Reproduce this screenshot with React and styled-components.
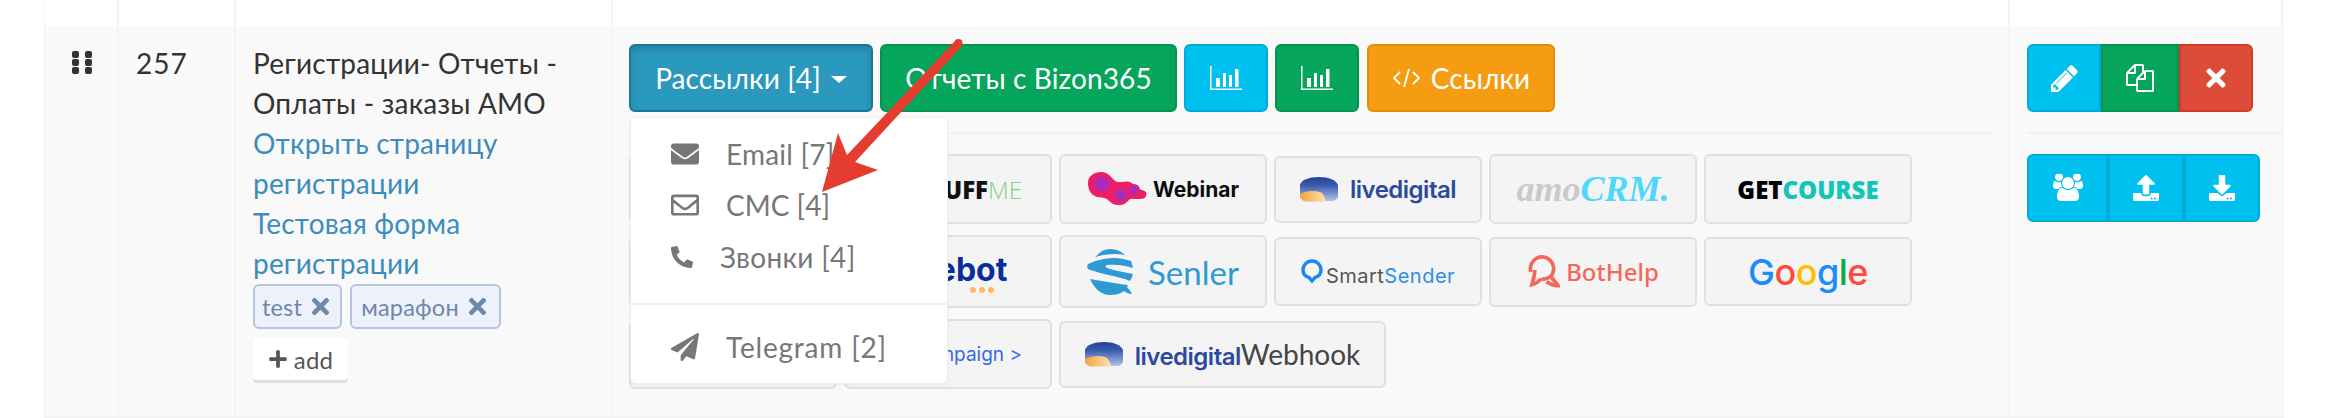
import React from 'react'
import styled, { createGlobalStyle } from 'styled-components'
import {
  FaEnvelope,
  FaRegEnvelope,
  FaPhoneAlt,
  FaPaperPlane,
  FaTimes,
  FaPlus,
  FaUpload,
  FaDownload,
} from 'react-icons/fa'

const GlobalStyle = createGlobalStyle`
  html, body {
    margin: 0;
    background: #fff;
    font-family: "Lato", "Noto Sans", sans-serif;
    font-size: 28px;
    letter-spacing: 0.2px;
    color: #333;
  }
`

const tones = {
  primary: ['#2b98bd', '#1c7796'],
  success: ['#05a65b', '#059250'],
  info: ['#00c0ef', '#00acd6'],
  warning: ['#f59c12', '#e08e0b'],
  danger: ['#dd4b39', '#d73925'],
}

const BarsIcon = () => (
  <svg width="32" height="24" viewBox="0 0 32 24" fill="#fff">
    <path d="M0 0h1.500v22.500H32V24H0z" />
    <rect x="6" y="12" width="4" height="9" />
    <rect x="13" y="7" width="3" height="14" />
    <rect x="19" y="9" width="3" height="12" />
    <rect x="25" y="3" width="3.500" height="18" />
  </svg>
)

const CodeIcon = () => (
  <svg width="29" height="20" viewBox="0 0 29 20" fill="none" stroke="#fff" strokeWidth="1.800">
    <path d="M8 4 2 10l6 6M21 4l6 6-6 6M17 1l-5 18" />
  </svg>
)

const PencilIcon = () => (
  <svg width="27" height="27" viewBox="128 128 1536 1536" fill="#fff">
    <path d="M491 1536l91-91-235-235-91 91v107h128v128h107zm523-928q0-22-22-22-10 0-17 7l-542 542q-7 7-7 17 0 22 22 22 10 0 17-7l542-542q7-7 7-17zm-54-192l416 416-832 832h-416v-416zm683 96q0 53-37 90l-166 166-416-416 166-165q36-38 90-38 53 0 91 38l235 234q37 39 37 91z" />
  </svg>
)

const FilesIcon = () => (
  <svg width="28" height="28" viewBox="0 0 1792 1792" fill="#fff">
    <path d="M1696 384q40 0 68 28t28 68v1216q0 40-28 68t-68 28h-960q-40 0-68-28t-28-68v-288h-544q-40 0-68-28t-28-68v-672q0-40 20-88t48-76l408-408q28-28 76-48t88-20h416q40 0 68 28t28 68v328q68-40 128-40h416zm-544 213l-299 299h299v-299zm-640-384l-299 299h299v-299zm196 647l316-316v-416h-384v416q0 40-28 68t-68 28h-416v640h512v-256q0-40 20-88t48-76zm956 804v-1152h-384v416q0 40-28 68t-68 28h-416v640h896z" />
  </svg>
)

const UsersIcon = () => (
  <svg width="30" height="28" viewBox="0 128 1920 1664" fill="#fff">
    <path d="M593 896q-162 5-265 128h-134q-82 0-138-40.500t-56-118.500q0-353 124-353 6 0 43.500 21t97.500 42.500 119 21.500q67 0 133-23-5 37-5 66 0 139 81 256zm1071 637q0 120-73 189.500t-194 69.500h-874q-121 0-194-69.500t-73-189.500q0-53 3.500-103.500t14-109 26.500-108.500 43-97.500 62-81 85.500-53.500 111.500-20q10 0 43 21.500t73 48 107 48 135 21.500 135-21.500 107-48 73-48 43-21.500q61 0 111.500 20t85.500 53.500 62 81 43 97.500 26.500 108.500 14 109 3.500 103.500zm-1024-1277q0 106-75 181t-181 75-181-75-75-181 75-181 181-75 181 75 75 181zm704 384q0 159-112.500 271.500t-271.500 112.500-271.500-112.500-112.500-271.500 112.500-271.500 271.500-112.500 271.500 112.500 112.500 271.500zm576 225q0 78-56 118.500t-138 40.500h-134q-103-123-265-128 81-117 81-256 0-29-5-66 66 23 133 23 59 0 119-21.500t97.500-42.500 43.500-21q124 0 124 353zm-128-609q0 106-75 181t-181 75-181-75-75-181 75-181 181-75 181 75 75 181z" />
  </svg>
)

const GripSvg = styled.svg`
  display: block;
`

const GripIcon = () => (
  <GripSvg width="20" height="23" viewBox="0 0 20 23" fill="#333">
    <rect x="0" y="0" width="7" height="7" rx="2" />
    <rect x="13" y="0" width="7" height="7" rx="2" />
    <rect x="0" y="8" width="7" height="7" rx="2" />
    <rect x="13" y="8" width="7" height="7" rx="2" />
    <rect x="0" y="16" width="7" height="7" rx="2" />
    <rect x="13" y="16" width="7" height="7" rx="2" />
  </GripSvg>
)

const WebinarMark = () => (
  <svg width="60" height="34" viewBox="0 0 60 34">
    <defs>
      <radialGradient id="wb">
        <stop offset="0" stopColor="#9a2bd6" />
        <stop offset="0.6" stopColor="#b62aa8" />
        <stop offset="1" stopColor="#ef1c66" />
      </radialGradient>
    </defs>
    <path d="M1 11C1 4 7 0 14 0c7 0 10 5 13 8 3 3 6 2 9 2 3-1 8-1 11 3 2 3 4 4 8 5 4 1 5 3 4 6-1 3-5 3-9 3-3 0-6-1-8 1-3 3-5 5-10 5-5 0-8-2-11-5-3-3-7-2-11-3C4 23 1 18 1 11z" fill="#ef1c66" />
    <circle cx="15" cy="12" r="10" fill="url(#wb)" />
    <circle cx="34" cy="23" r="8" fill="url(#wb)" />
    <circle cx="47" cy="18" r="6" fill="url(#wb)" />
  </svg>
)

const LiveMark = () => (
  <svg width="38" height="25" viewBox="0 0 38 25">
    <defs>
      <linearGradient id="lvb" x1="0" y1="0" x2="0" y2="1">
        <stop offset="0" stopColor="#263f96" />
        <stop offset="0.35" stopColor="#3a5bae" />
        <stop offset="1" stopColor="#b4c2e6" />
      </linearGradient>
      <linearGradient id="lvo" x1="0" y1="0" x2="1" y2="0">
        <stop offset="0" stopColor="#f5a23a" />
        <stop offset="1" stopColor="#fde0b5" />
      </linearGradient>
    </defs>
    <path d="M0 8C1 3 9 0 19 0s17 3 19 8v10c0 4-3 6-7 6H7c-4 0-7-2-7-6z" fill="url(#lvb)" />
    <path d="M0 17c5-3 14-4 20-2 3 1 5 5 6 9.500H7c-4 0-7-2-7-7z" fill="url(#lvo)" />
  </svg>
)

const SenlerMark = () => (
  <svg width="46" height="46" viewBox="0 0 46 46" fill="#2d9ad3">
    <path d="M8 9C12 3 17 0 23 0c6 0 11 2 15 6-9-2-18-1-26 1-2 0-3 1-4 2z" />
    <path d="M1 15c6-3 17-6 26-6 5 0 11 1 17 3 1 2 1 4 2 7-6-2-18-4-26-3-2 1-2 2 0 3 9 3 18 4 26 6-1 3-2 5-3 7-8-4-30-7-42-12-1-2-1-3 0-5z" />
    <path d="M3 30c9 2 20 3 30 5l8 1-1 2c2 2 4 5 5 7-3 0-6-1-8-3-4 3-9 4-14 4-9 0-16-7-20-16z" />
  </svg>
)

const SmartMark = () => (
  <svg width="22" height="26" viewBox="0 0 22 26" fill="none">
    <path d="M11 22 8 18.500C4.500 17.500 2 14.500 2 11a9 9 0 0 1 18 0c0 3.500-2.500 6.500-6 7.500z" stroke="#1a86f0" strokeWidth="3.400" />
  </svg>
)

const BotHelpMark = () => (
  <svg width="33" height="33" viewBox="0 0 34 33" fill="none" stroke="#f4675c" strokeWidth="3.800">
    <path d="M4 17A12 12 0 1 1 24 22c-3 2-6 3-9 2" />
    <path d="M8 15c0 6-2 11-3 15 4-1 7-3 10-6" />
    <path d="M24 21c2 3 6 7 8 10-5 0-9-2-12-4" />
  </svg>
)

const Page = styled.div`
  position: relative;
  width: 2332px;
  height: 418px;
  overflow: hidden;
`

const Table = styled.div`
  margin-left: 44px;
  width: 2239px;
  border-left: 1px solid #f4f4f4;
`

const Row = styled.div`
  display: grid;
  grid-template-columns: 74px 117px 377px 1397px 273px;
  height: ${(p) => p.$h}px;
  background: ${(p) => p.$bg};
  border-bottom: ${(p) => (p.$bordered ? '2px solid #f4f4f4' : 'none')};
  box-sizing: border-box;
`

const Cell = styled.div`
  position: relative;
  box-sizing: border-box;
  border-right: 2px solid #f4f4f4;
  padding: ${(p) => p.$pad || '0'};
`

const Num = styled.div`
  line-height: 40px;
  letter-spacing: 1px;
`

const Title = styled.div`
  line-height: 40px;
  width: 320px;
  color: #333;
`

const TitleLink = styled.a`
  display: block;
  width: 320px;
  line-height: 40px;
  color: #3c8dbc;
  text-decoration: none;
`

const Tags = styled.div`
  display: flex;
  gap: 8px;
  margin-top: 1px;
`

const Tag = styled.span`
  display: inline-flex;
  align-items: center;
  justify-content: center;
  gap: 6px;
  box-sizing: border-box;
  width: ${(p) => p.$w}px;
  height: 45px;
  border: 2px solid #b5c5de;
  border-radius: 6px;
  background: #edf1f9;
  color: #6e87ad;
  font-size: 23.500px;
`

const AddBtn = styled.span`
  display: inline-flex;
  align-items: center;
  justify-content: center;
  gap: 6px;
  box-sizing: border-box;
  width: 95px;
  height: 42px;
  margin-top: 9px;
  border-radius: 4px;
  background: #fff;
  box-shadow: 0 3px 0 #e0e0e0;
  color: #555;
  font-size: 24px;
`

const BtnRow = styled.div`
  display: flex;
  gap: 7px;
`

const Btn = styled.span`
  display: inline-flex;
  align-items: center;
  justify-content: center;
  gap: 10px;
  box-sizing: border-box;
  width: ${(p) => p.$w}px;
  height: 68px;
  margin-left: ${(p) => p.$ml || 0}px;
  border: 2px solid ${(p) => tones[p.$tone][1]};
  border-radius: 6px;
  background: ${(p) => tones[p.$tone][0]};
  box-shadow: ${(p) => (p.$pressed ? 'inset 0 4px 6px rgba(0, 0, 0, 0.14)' : 'none')};
  color: #fff;
  letter-spacing: 0.1px;
  white-space: nowrap;
`

const Caret = styled.i`
  width: 0;
  height: 0;
  border-left: 8px solid transparent;
  border-right: 8px solid transparent;
  border-top: 7px solid #fff;
  margin-top: 3px;
`

const Divider = styled.div`
  height: 2px;
  margin: 20px ${(p) => p.$mr || 0}px 20px 0;
  background: #f1f1f1;
`

const LogoGrid = styled.div`
  display: flex;
  flex-direction: column;
  gap: 11px;
`

const LogoRow = styled.div`
  display: flex;
  align-items: center;
  gap: 7px;
`

const Tile = styled.div`
  display: flex;
  align-items: center;
  justify-content: ${(p) => (p.$pr ? 'flex-end' : 'center')};
  gap: ${(p) => p.$gap || 0}px;
  box-sizing: border-box;
  width: ${(p) => p.$w || 208}px;
  height: ${(p) => p.$h || 70}px;
  padding-right: ${(p) => p.$pr || 0}px;
  border: 2px solid #e0e0e0;
  border-radius: 6px;
  background: #f4f4f4;
  letter-spacing: 0;
  white-space: nowrap;
`

const LogoText = styled.span`
  font-family: ${(p) => p.$font || '"Inter", sans-serif'};
  font-size: ${(p) => p.$size}px;
  font-weight: ${(p) => p.$weight || 400};
  font-style: ${(p) => (p.$italic ? 'italic' : 'normal')};
  letter-spacing: ${(p) => p.$ls || 0}px;
  color: ${(p) => p.$color};
`

const SalebotLogo = styled.div`
  display: flex;
  flex-direction: column;
  align-items: flex-end;
`

const Dots = styled.div`
  display: flex;
  gap: 3px;
  margin: -2px 13px 0 0;
  i {
    width: 6px;
    height: 6px;
    border-radius: 50%;
    background: #fdbb63;
  }
`

const BtnGroup = styled.div`
  display: flex;
`

const Segment = styled(Btn)`
  border-radius: 0;
  &:first-child {
    border-radius: 6px 0 0 6px;
  }
  &:last-child {
    border-radius: 0 6px 6px 0;
  }
`

const Menu = styled.div`
  position: absolute;
  left: 17px;
  top: 91px;
  z-index: 2;
  box-sizing: border-box;
  width: 318px;
  height: 267px;
  padding-top: 10px;
  border: 1px solid #eeeeee;
  border-radius: 6px;
  background: #fff;
  box-shadow: 0 1px 3px rgba(0, 0, 0, 0.06);
`

const MenuItem = styled.div`
  display: flex;
  align-items: center;
  gap: 27px;
  height: 51.500px;
  padding-left: 40px;
  color: #777;
  letter-spacing: ${(p) => p.$ls}px;
  svg {
    flex: none;
  }
`

const MenuDivider = styled.div`
  height: 2px;
  margin: 20px 0 17px;
  background: #eeeeee;
`

const Arrow = styled.svg`
  position: absolute;
  left: 812px;
  top: 36px;
  z-index: 3;
`

const App = () => (
  <Page>
    <GlobalStyle />
    <Table>
      <Row $h={26} $bg="#fff">
        <Cell />
        <Cell />
        <Cell />
        <Cell />
        <Cell />
      </Row>
      <Row $h={392} $bg="#f9f9f9" $bordered>
        <Cell $pad="25px 0 0 27px">
          <GripIcon />
        </Cell>
        <Cell $pad="17px 0 0 17px">
          <Num>257</Num>
        </Cell>
        <Cell $pad="17px 0 0 17px">
          <Title>Регистрации- Отчеты - Оплаты - заказы АМО</Title>
          <TitleLink>Открыть страницу регистрации</TitleLink>
          <TitleLink>Тестовая форма регистрации</TitleLink>
          <Tags>
            <Tag $w={89}>
              test <FaTimes size={25} />
            </Tag>
            <Tag $w={151}>
              марафон <FaTimes size={25} />
            </Tag>
          </Tags>
          <AddBtn>
            <FaPlus size={20} /> add
          </AddBtn>
        </Cell>
        <Cell $pad="18px 0 0 16px">
          <BtnRow>
            <Btn $tone="primary" $w={244} $pressed>
              Рассылки [4] <Caret />
            </Btn>
            <Btn $tone="success" $w={297}>
              Отчеты с Bizon365
            </Btn>
            <Btn $tone="info" $w={84}>
              <BarsIcon />
            </Btn>
            <Btn $tone="success" $w={84}>
              <BarsIcon />
            </Btn>
            <Btn $tone="warning" $w={188} $ml={1}>
              <CodeIcon /> Ссылки
            </Btn>
          </BtnRow>
          <Divider $mr={16} />
          <LogoGrid>
            <LogoRow>
              <Tile />
              <Tile $pr={28}>
                <LogoText $size={24} $weight={800} $font='"Open Sans", sans-serif' $color="#111">
                  STUFF
                </LogoText>
                <LogoText $size={24} $weight={300} $font='"Open Sans", sans-serif' $color="#7fd08a">
                  ME
                </LogoText>
              </Tile>
              <Tile $gap={6}>
                <WebinarMark />
                <LogoText $size={21} $weight={700} $color="#0c0c0c">
                  Webinar
                </LogoText>
              </Tile>
              <Tile $h={67} $gap={12}>
                <LiveMark />
                <LogoText $size={24} $weight={600} $color="#2b4a9f" $ls={-0.5}>
                  livedigital
                </LogoText>
              </Tile>
              <Tile>
                <LogoText $size={36} $weight={700} $italic $font='"Liberation Serif", serif' $color="#c8cacc">
                  amo
                </LogoText>
                <LogoText $size={36} $weight={700} $italic $font='"Liberation Serif", serif' $color="#4fd8fb">
                  CRM.
                </LogoText>
              </Tile>
              <Tile>
                <LogoText $size={24} $weight={800} $font='"Open Sans", sans-serif' $color="#000">
                  GET
                </LogoText>
                <LogoText $size={24} $weight={800} $font='"Open Sans", sans-serif' $color="#10c6b8">
                  COURSE
                </LogoText>
              </Tile>
            </LogoRow>
            <LogoRow>
              <Tile />
              <Tile $h={73}>
                <SalebotLogo>
                  <LogoText $size={32} $weight={700} $color="#0b2d9c">
                    Salebot
                  </LogoText>
                  <Dots>
                    <i />
                    <i />
                    <i />
                  </Dots>
                </SalebotLogo>
              </Tile>
              <Tile $h={73} $gap={15}>
                <SenlerMark />
                <LogoText $size={33} $font='"Lato", sans-serif' $color="#2d9ad3">
                  Senler
                </LogoText>
              </Tile>
              <Tile $h={69} $gap={3}>
                <SmartMark />
                <div>
                  <LogoText $size={20} $color="#555" $ls={0.5}>
                    Smart
                  </LogoText>
                  <LogoText $size={20} $color="#2f8de4" $ls={0.5}>
                    Sender
                  </LogoText>
                </div>
              </Tile>
              <Tile $gap={6}>
                <BotHelpMark />
                <LogoText $size={24} $weight={500} $font='"Noto Sans", sans-serif' $color="#f4675c">
                  BotHelp
                </LogoText>
              </Tile>
              <Tile $h={69}>
                <LogoText $size={36} $weight={500} $ls={-0.5} $font='"Inter", sans-serif'>
                  <span style={{ color: '#1a8cff' }}>G</span>
                  <span style={{ color: '#ff4b3e' }}>o</span>
                  <span style={{ color: '#ffbe00' }}>o</span>
                  <span style={{ color: '#1a8cff' }}>g</span>
                  <span style={{ color: '#0aa84f' }}>l</span>
                  <span style={{ color: '#ff4b3e' }}>e</span>
                </LogoText>
              </Tile>
            </LogoRow>
            <LogoRow>
              <Tile />
              <Tile $pr={28}>
                <LogoText $size={19} $color="#356ae6">
                  ActiveCampaign&nbsp;&gt;
                </LogoText>
              </Tile>
              <Tile $w={327} $h={67} $gap={12}>
                <LiveMark />
                <div>
                  <LogoText $size={24} $weight={600} $color="#2b4a9f" $ls={-0.5}>
                    livedigital
                  </LogoText>
                  <LogoText $size={28} $font='"Lato", sans-serif' $color="#444">
                    Webhook
                  </LogoText>
                </div>
              </Tile>
            </LogoRow>
          </LogoGrid>
          <Menu>
            <MenuItem $ls={0.2}>
              <FaEnvelope size={28} color="#777" />
              Email [7]
            </MenuItem>
            <MenuItem $ls={0}>
              <FaRegEnvelope size={28} color="#777" />
              СМС [4]
            </MenuItem>
            <MenuItem $ls={0.3}>
              <FaPhoneAlt size={22} color="#777" />
              Звонки [4]
            </MenuItem>
            <MenuDivider />
            <MenuItem $ls={0.8}>
              <FaPaperPlane size={28} color="#777" />
              Telegram [2]
            </MenuItem>
          </Menu>
        </Cell>
        <Cell $pad="18px 0 0 17px">
          <BtnGroup>
            <Segment $tone="info" $w={74}>
              <PencilIcon />
            </Segment>
            <Segment $tone="success" $w={78}>
              <FilesIcon />
            </Segment>
            <Segment $tone="danger" $w={74}>
              <FaTimes size={28} />
            </Segment>
          </BtnGroup>
          <Divider $mr={0} />
          <BtnGroup>
            <Segment $tone="info" $w={81}>
              <UsersIcon />
            </Segment>
            <Segment $tone="info" $w={76}>
              <FaUpload size={26} />
            </Segment>
            <Segment $tone="info" $w={76}>
              <FaDownload size={26} />
            </Segment>
          </BtnGroup>
        </Cell>
      </Row>
    </Table>
    <Arrow width="160" height="170" viewBox="0 0 160 170" fill="#e53c30">
      <polygon points="10,156 26,97 35,119 143,5 150,10 43,126 66,134" />
      <circle cx="146.500" cy="7" r="4" />
    </Arrow>
  </Page>
)

export default App
